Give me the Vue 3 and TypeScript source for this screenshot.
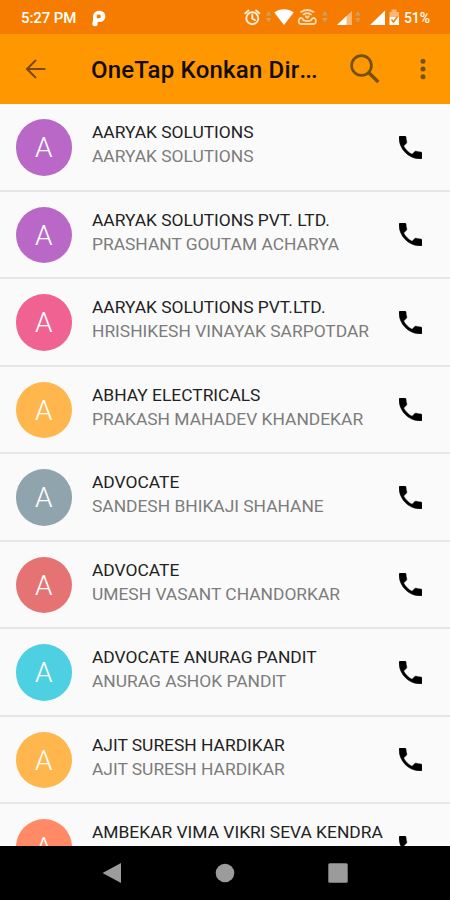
<script setup lang="ts">
interface Contact {
  title: string
  name?: string
  color: string
}

const contacts: Contact[] = [
  { title: 'AARYAK SOLUTIONS', name: 'AARYAK SOLUTIONS', color: '#ba68c8' },
  { title: 'AARYAK SOLUTIONS PVT. LTD.', name: 'PRASHANT GOUTAM ACHARYA', color: '#ba68c8' },
  { title: 'AARYAK SOLUTIONS PVT.LTD.', name: 'HRISHIKESH VINAYAK SARPOTDAR', color: '#f06292' },
  { title: 'ABHAY ELECTRICALS', name: 'PRAKASH MAHADEV KHANDEKAR', color: '#ffb74d' },
  { title: 'ADVOCATE', name: 'SANDESH BHIKAJI SHAHANE', color: '#90a4ae' },
  { title: 'ADVOCATE', name: 'UMESH VASANT CHANDORKAR', color: '#e57373' },
  { title: 'ADVOCATE ANURAG PANDIT', name: 'ANURAG ASHOK PANDIT', color: '#4dd0e1' },
  { title: 'AJIT SURESH HARDIKAR', name: 'AJIT SURESH HARDIKAR', color: '#ffb74d' },
  { title: 'AMBEKAR VIMA VIKRI SEVA KENDRA', color: '#ff8a65' },
]
</script>

<template>
  <div class="screen">
    <div class="status">
      <span class="time">5:27 PM</span>
      <svg class="brand" width="14" height="17" viewBox="0 0 14 17">
        <path fill="#fff" fill-rule="evenodd" d="M1 7.200C1 3 3.700.8 7.300.8c3.600 0 6 2.300 6 5.500 0 3.500-2.400 5.800-5.900 5.800H5.600V14c0 1.500-1 2.200-2.700 2.200C1.100 16.200.3 15.500.3 13.800 .3 12.500.7 11.500 1 10.500zM6.300 4.600c-1 0-1.500.6-1.500 1.600v2.100h1.700c1.500 0 2.300-.7 2.300-1.900 0-1.200-.9-1.800-2.500-1.800z" />
      </svg>
      <svg class="indicators" width="158" height="20" viewBox="242 8 158 20">
        <g fill="none" stroke="#ffeedd" stroke-width="1.900" stroke-linecap="round">
          <circle cx="252.300" cy="18.200" r="6" />
          <path d="M245.300 13.300l3.200-2.800M259.300 13.300l-3.200-2.800M252.300 14.800v3.700l2.600 1.500" />
        </g>
        <g fill="#d0a060">
          <path d="M265.800 15.500l2.800-4.500 2.800 4.500zM265.800 17.900l2.800 4.500 2.800-4.500z" />
          <path d="M322 15.500l2.800-4.500 2.800 4.500zM322 17.900l2.800 4.500 2.800-4.500z" />
          <path d="M355 15.500l2.800-4.500 2.800 4.500zM355 17.900l2.800 4.500 2.800-4.500z" />
        </g>
        <path fill="#fff" d="M274.300 12.500c5.800-4.300 13.600-4.300 19.400 0L284 25z" />
        <g fill="none" stroke="#ffd9b0" stroke-width="1.800" stroke-linecap="round" stroke-linejoin="round">
          <path d="M301 11.900c3.800-2.300 8.800-2.300 12.600 0M303.600 14.400c2.400-1.500 5-1.500 7.400 0" />
          <path d="M305.900 16.300l1.400 1.600 1.400-1.600" />
          <path d="M300 18.200c-2 1.600-1.900 5.800 1.100 5.800h12.400c3 0 3.100-4.200 1.100-5.800-1.500-.6-2.900.3-3.200 1.900-2.400 1.200-5.800 1.200-8.200 0-.3-1.600-1.700-2.500-3.200-1.900z" />
        </g>
        <path fill="#fbb879" d="M337 25l15-14v14z" />
        <path fill="#fff" d="M337 25l9.500-9v9z" />
        <path fill="#fff" d="M370 25l15-14.500V25z" />
        <path fill="#fbb879" d="M389.500 12h2v-2.500h5V12h2.500v5.500h-9.500z" />
        <path fill="#fff" d="M389.500 17h9.500v8h-9.500z" />
        <path fill="none" stroke="#f57c00" stroke-width="1.500" d="M391.500 19.500l2 2.500 4-5.500" />
      </svg>
      <span class="battery">51%</span>
    </div>

    <header class="toolbar">
      <svg class="back" width="22" height="22" viewBox="0 0 22 22">
        <path fill="none" stroke="#7a4a05" stroke-width="2" d="M20.500 11H2.500M11 2l-9 9 9 9" />
      </svg>
      <h1>OneTap Konkan Dir<span class="dots">...</span></h1>
      <svg class="search" width="30" height="30" viewBox="0 0 30 30">
        <g fill="none" stroke="#75500f">
          <circle cx="11.500" cy="11.500" r="9.900" stroke-width="2.700" />
          <path d="M18.300 18.300l10 9.600" stroke-width="3.400" />
        </g>
      </svg>
      <svg class="more" width="6" height="22" viewBox="0 0 6 22">
        <g fill="#75500f">
          <circle cx="3" cy="3.300" r="2.500" />
          <circle cx="3" cy="11" r="2.500" />
          <circle cx="3" cy="18.700" r="2.500" />
        </g>
      </svg>
    </header>

    <main class="list">
      <div v-for="(contact, i) in contacts" :key="i" class="row">
        <div class="avatar" :style="{ backgroundColor: contact.color }">A</div>
        <div class="labels">
          <div class="title">{{ contact.title }}</div>
          <div v-if="contact.name" class="name">{{ contact.name }}</div>
        </div>
        <svg class="phone" width="23" height="23" viewBox="3 3 18 18">
          <path d="M6.620 10.790c1.440 2.830 3.760 5.140 6.590 6.590l2.200-2.200c.27-.27.67-.36 1.020-.24 1.120.37 2.330.57 3.570.57.55 0 1 .45 1 1V20c0 .55-.45 1-1 1-9.390 0-17-7.610-17-17 0-.55.45-1 1-1h3.500c.55 0 1 .45 1 1 0 1.250.2 2.450.57 3.570.11.35.03.74-.25 1.020l-2.200 2.200z" />
        </svg>
      </div>
    </main>

    <nav class="navbar">
      <svg width="20" height="22" viewBox="0 0 20 22"><path fill="#9b9b9b" d="M.5 11L19 1v20z" /></svg>
      <svg width="20" height="20" viewBox="0 0 20 20"><circle cx="10" cy="10" r="9.300" fill="#9b9b9b" /></svg>
      <svg width="20" height="20" viewBox="0 0 20 20"><rect x=".3" y=".3" width="19.400" height="19.400" rx="1.500" fill="#9b9b9b" /></svg>
    </nav>
  </div>
</template>

<style>
body {
  margin: 0;
}
</style>

<style scoped>
.screen {
  width: 450px;
  height: 900px;
  display: flex;
  flex-direction: column;
  overflow: hidden;
  background: #fafafa;
  font-family: Roboto, sans-serif;
}
.screen svg {
  display: block;
  flex: none;
}
.status {
  height: 34px;
  flex: none;
  box-sizing: border-box;
  display: flex;
  align-items: center;
  padding: 2px 0 0 21px;
  background: #f57c00;
  color: #fff;
  font-weight: 500;
}
.time {
  width: 71px;
  font-size: 15px;
  letter-spacing: -0.1px;
  white-space: nowrap;
}
.indicators {
  margin-left: 136px;
}
.battery {
  margin-left: 4px;
  font-size: 14px;
  letter-spacing: -0.1px;
}
.toolbar {
  height: 70px;
  flex: none;
  box-sizing: border-box;
  display: flex;
  align-items: center;
  padding-left: 25px;
  background: #ff9800;
}
h1 {
  width: 259px;
  margin: 2px 0 0 44px;
  font-size: 24px;
  line-height: 30px;
  font-weight: 500;
  letter-spacing: 0.2px;
  color: #140c00;
  white-space: nowrap;
}
.dots {
  letter-spacing: -0.9px;
}
.more {
  margin-left: 40px;
}
.list {
  flex: 1;
  min-height: 0;
  overflow: hidden;
}
.row {
  height: 87.500px;
  box-sizing: border-box;
  display: flex;
  align-items: flex-start;
  padding: 15px 28px 0 15.500px;
  border-bottom: 2px solid #e6e6e6;
}
.avatar {
  width: 56.500px;
  height: 56.500px;
  flex: none;
  border-radius: 50%;
  color: #fff;
  font-size: 28px;
  line-height: 57px;
  font-weight: 300;
  text-align: center;
}
.labels {
  flex: 1;
  margin: 1px 0 0 20px;
  font-size: 17.400px;
  line-height: 24px;
  white-space: nowrap;
}
.title {
  color: #222;
}
.name {
  color: #7c7c7c;
}
.phone {
  margin-top: 16.500px;
  stroke: #000;
  stroke-width: 0.4;
}
.navbar {
  height: 54px;
  flex: none;
  display: flex;
  align-items: center;
  justify-content: center;
  gap: 93px;
  background: #000;
}
</style>
